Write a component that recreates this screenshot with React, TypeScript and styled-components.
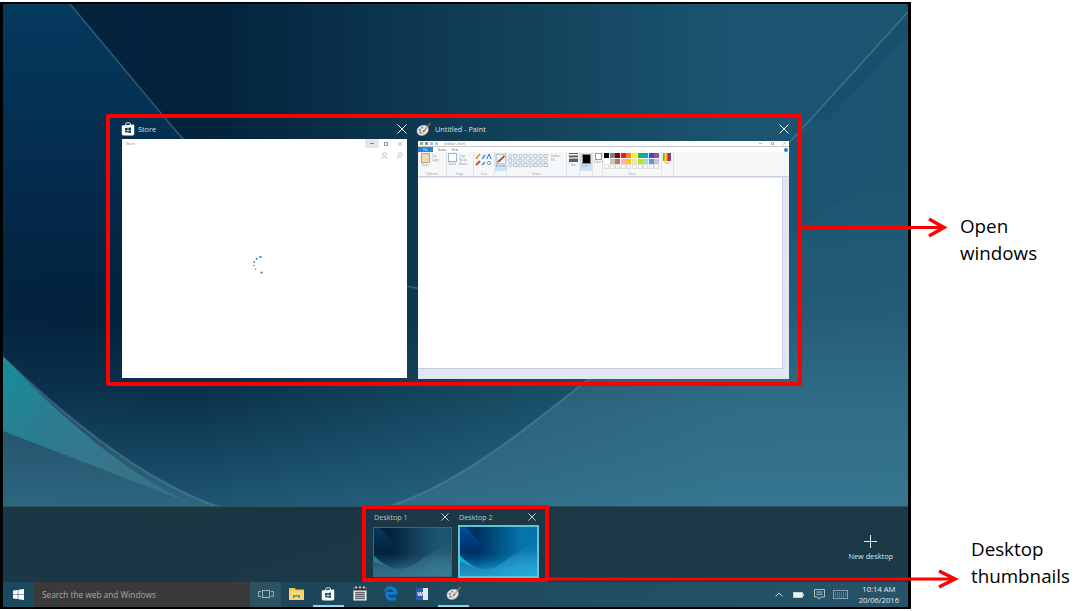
import styled, { createGlobalStyle } from "styled-components";
import { FaEdgeLegacy } from "react-icons/fa6";

// Task view screenshot: two windows and two desktop thumbnails, with red call-outs

const ROW_ONE = ["#000000", "#7f7f7f", "#880015", "#ed1c24", "#ff7f27", "#fff200", "#22b14c", "#00a2e8", "#3f48cc", "#a349a4"];
const ROW_TWO = ["#ffffff", "#c3c3c3", "#b97a57", "#ffaec9", "#ffc90e", "#efe4b0", "#b5e61d", "#99d9ea", "#7092be", "#c8bfe7"];
const ROW_THREE = Array(10).fill("#f8f8f8");

const UPPER_CURVE = "M70 4L165 118C250 220 360 300 470 290C620 275 740 200 810 120L908 12";
const LOWER_CURVE = "M3 357C100 450 200 522 300 522C420 522 510 440 590 378C700 295 820 215 908 160";

const GlobalStyle = createGlobalStyle`
  * { box-sizing: border-box; }
  body {
    margin: 0;
    background: #ffffff;
    font-family: "Open Sans", "Noto Sans", sans-serif;
  }
`;

const Page = styled.div`
  position: relative;
  display: flex;
  width: 1076px;
  height: 611px;
  overflow: hidden;
  background: #ffffff;
`;

const Screen = styled.div`
  position: relative;
  display: flex;
  flex-direction: column;
  flex: none;
  width: 911px;
  height: 607px;
  margin-top: 2px;
  border-style: solid;
  border-color: #000000;
  border-width: 2px 3px 2px 3px;
  overflow: hidden;
`;

const WallpaperSvg = styled.svg<{ $bright?: boolean }>`
  display: block;
  width: 100%;
  height: 100%;
  filter: ${(p) => (p.$bright ? "brightness(1.3) saturate(1.5)" : "none")};
`;

const WallpaperLayer = styled.div`
  position: absolute;
  inset: 0;
`;

const Stage = styled.div`
  position: relative;
  flex: none;
  height: 502px;
  padding: 110px 0 0 103px;
`;

const WindowsFrame = styled.div`
  display: flex;
  width: 696px;
  height: 272px;
  padding: 2px 8px 0 12px;
  border: 4px solid #ff0000;
  border-radius: 2px;
`;

const WindowCard = styled.div<{ $width: number; $gap: number }>`
  display: flex;
  flex-direction: column;
  flex: none;
  width: ${(p) => p.$width}px;
  margin-right: ${(p) => p.$gap}px;
`;

const WindowHeader = styled.div`
  display: flex;
  align-items: center;
  height: 19px;
  padding-bottom: 1px;
`;

const WindowTitle = styled.span<{ $indent: number }>`
  flex: 1;
  margin-left: ${(p) => p.$indent}px;
  color: #d5e1e7;
  font-size: 7.3px;
  white-space: nowrap;
`;

const CloseIcon = styled.svg<{ $size: number }>`
  flex: none;
  width: ${(p) => p.$size}px;
  height: ${(p) => p.$size}px;
  stroke: #f2f6f8;
  stroke-width: 1;
  fill: none;
`;

const AppIconSlot = styled.div<{ $shift: number }>`
  display: flex;
  flex: none;
  margin-left: ${(p) => p.$shift}px;
`;

const StoreThumb = styled.div`
  display: flex;
  flex-direction: column;
  height: 239px;
  background: #ffffff;
`;

const StoreTitleBar = styled.div`
  display: flex;
  align-items: center;
  height: 9px;
  padding-left: 4px;
`;

const TinyText = styled.span<{ $color?: string; $size?: number }>`
  flex: 1;
  color: ${(p) => p.$color ?? "#777777"};
  font-size: ${(p) => p.$size ?? 3.5}px;
  white-space: nowrap;
`;

const CaptionButton = styled.div<{ $active?: boolean }>`
  display: flex;
  align-items: center;
  justify-content: center;
  width: 14px;
  height: 9px;
  background: ${(p) => (p.$active ? "#e6e6e6" : "transparent")};
`;

const StoreTools = styled.div`
  display: flex;
  justify-content: flex-end;
  gap: 8px;
  padding: 4px 4px 0 0;
`;

const SpinnerArea = styled.div`
  display: flex;
  flex: 1;
  justify-content: center;
  padding: 97px 11px 0 0;
`;

const PaintThumb = styled.div`
  display: flex;
  flex-direction: column;
  height: 238px;
  margin-top: 2px;
  background: #e0e7f3;
  filter: blur(0.2px);
`;

const PaintTitleBar = styled.div`
  display: flex;
  align-items: center;
  gap: 2px;
  height: 6px;
  padding: 0 3px 0 2px;
  background: #ffffff;
  border-bottom: 1px solid #c9c9c9;
`;

const QuickAccess = styled.div`
  display: flex;
  gap: 2px;
  margin-right: 4px;
`;

const QuickDot = styled.div<{ $color: string }>`
  width: 3px;
  height: 3px;
  background: ${(p) => p.$color};
`;

const WindowGlyphs = styled.div`
  display: flex;
  align-items: center;
  gap: 9px;
`;

const PaintTabs = styled.div`
  display: flex;
  align-items: center;
  gap: 5px;
  height: 5px;
  padding-right: 1px;
  background: #ffffff;
`;

const FileTab = styled.div`
  display: flex;
  align-items: center;
  justify-content: center;
  width: 15px;
  height: 5px;
  background: #2b7fd4;
  color: #ffffff;
  font-size: 3px;
`;

const TabLabel = styled.span`
  color: #555555;
  font-size: 3px;
`;

const HelpDot = styled.div`
  width: 4px;
  height: 4px;
  margin-left: auto;
  border-radius: 50%;
  background: #1f7fd6;
`;

const Ribbon = styled.div`
  display: flex;
  height: 25px;
  background: #f6f7f8;
  border-bottom: 1px solid #c6cee0;
`;

const RibbonGroup = styled.div<{ $width: number; $pad?: number }>`
  position: relative;
  display: flex;
  gap: 2px;
  flex: none;
  width: ${(p) => p.$width}px;
  padding: 1px 0 0 ${(p) => p.$pad ?? 1}px;
  border-right: 1px solid #e2e3e6;
`;

const GroupLabel = styled.span`
  position: absolute;
  left: 0;
  right: 0;
  bottom: 0;
  color: #9a9a9a;
  font-size: 2.6px;
  line-height: 4px;
  text-align: center;
`;

const ToolBlock = styled.div<{ $width: number; $height: number; $color: string; $edge?: string }>`
  flex: none;
  width: ${(p) => p.$width}px;
  height: ${(p) => p.$height}px;
  background: ${(p) => p.$color};
  border: 1px solid ${(p) => p.$edge ?? "transparent"};
`;

const ToolColumn = styled.div`
  display: flex;
  flex-direction: column;
  align-items: center;
  flex: none;
`;

const ToolStack = styled.div`
  display: flex;
  flex-direction: column;
  gap: 0;
  padding-top: 1px;
`;

const ToolLine = styled.span`
  color: #8a8a8a;
  font-size: 2.8px;
  line-height: 4px;
  white-space: nowrap;
`;

const Highlight = styled.div`
  display: flex;
  flex: none;
  flex-direction: column;
  align-items: center;
  width: 12px;
  height: 18px;
  padding-top: 1px;
  background: #cfe3f6;
`;

const SwatchGrid = styled.div`
  display: grid;
  grid-template-columns: repeat(10, 5px);
  grid-auto-rows: 5px;
  gap: 0.6px;
`;

const Swatch = styled.div<{ $empty: boolean }>`
  border: ${(p) => (p.$empty ? "0.5px solid #dedede" : "none")};
`;

const PaintWorkspace = styled.div`
  display: flex;
  flex: 1;
  flex-direction: column;
  padding: 1px 6px 0 0;
`;

const PaintCanvas = styled.div`
  height: 191px;
  background: #ffffff;
  border-right: 1px solid #c4cde0;
  border-bottom: 1px solid #c4cde0;
`;

const DesktopBar = styled.div`
  position: relative;
  display: flex;
  flex: none;
  height: 76px;
  padding-left: 359px;
  background: rgba(24, 50, 62, 0.9);
  border-top: 1px solid rgba(70, 110, 125, 0.5);
`;

const DesktopFrame = styled.div`
  display: flex;
  gap: 6px;
  width: 187px;
  height: 77px;
  margin-top: -2px;
  padding: 0 0 0 7px;
  border: 4px solid #ff0000;
  border-radius: 2px;
`;

const DesktopCard = styled.div<{ $width: number }>`
  display: flex;
  flex-direction: column;
  flex: none;
  width: ${(p) => p.$width}px;
`;

const DesktopHeader = styled.div`
  display: flex;
  align-items: center;
  justify-content: space-between;
  height: 17px;
  padding: 0 3px 1px 1px;
`;

const DesktopLabel = styled.span`
  color: #b9c8cf;
  font-size: 7.2px;
  white-space: nowrap;
`;

const DesktopThumb = styled.div<{ $active?: boolean }>`
  overflow: hidden;
  height: ${(p) => (p.$active ? 54 : 50)}px;
  margin-top: ${(p) => (p.$active ? -1 : 1)}px;
  border: ${(p) => (p.$active ? "2px solid #5fc3dc" : "1px solid #3f6676")};
  outline: ${(p) => (p.$active ? "1px solid #0c3040" : "none")};
  outline-offset: -3px;
`;

const NewDesktop = styled.div`
  display: flex;
  flex-direction: column;
  align-items: center;
  gap: 3px;
  margin-left: auto;
  margin-right: 15px;
  padding-top: 28px;
`;

const NewDesktopLabel = styled.span`
  color: #dfe7ea;
  font-size: 7.3px;
  white-space: nowrap;
`;

const Taskbar = styled.div`
  position: relative;
  display: flex;
  flex: none;
  height: 25px;
  background: linear-gradient(90deg, rgba(24, 62, 78, 0.95), rgba(36, 82, 102, 0.95));
`;

const StartTile = styled.div`
  display: flex;
  align-items: center;
  justify-content: center;
  width: 31px;
  background: #1b4a5f;
`;

const SearchBox = styled.div`
  display: flex;
  align-items: center;
  width: 216px;
  padding-left: 8px;
  background: #3a3a3a;
  color: #a9a9a9;
  font-size: 8.3px;
  white-space: nowrap;
`;

const TaskSlot = styled.div<{ $active?: boolean; $lit?: boolean }>`
  display: flex;
  align-items: center;
  justify-content: center;
  flex: none;
  width: 31.3px;
  border-bottom: 2px solid ${(p) => (p.$active ? "#8fd6e8" : "transparent")};
  background: ${(p) => (p.$lit ? "rgba(255,255,255,0.07)" : "transparent")};
`;

const WordTile = styled.div`
  display: flex;
  align-items: center;
  justify-content: center;
  width: 12px;
  height: 12px;
  background: linear-gradient(90deg, #2a5caa 62%, #dfe8f5 62%);
  color: #ffffff;
  font-family: "Liberation Sans", sans-serif;
  font-size: 6px;
  font-weight: 700;
  padding-right: 4px;
`;

const Tray = styled.div`
  display: flex;
  align-items: center;
  margin-left: auto;
  padding-right: 9px;
`;

const TrayIcon = styled.div<{ $width: number }>`
  display: flex;
  justify-content: center;
  flex: none;
  width: ${(p) => p.$width}px;
`;

const Clock = styled.div`
  margin-left: 8px;
  color: #e6edf0;
  font-size: 7.6px;
  line-height: 11px;
  text-align: center;
  white-space: nowrap;
`;

const Side = styled.div`
  display: flex;
  flex-direction: column;
  color: #000000;
  font-size: 18.8px;
  line-height: 27px;
`;

const Note = styled.div<{ $top: number; $left: number }>`
  margin-top: ${(p) => p.$top}px;
  margin-left: ${(p) => p.$left}px;
  white-space: nowrap;
`;

const ArrowLayer = styled.svg`
  position: absolute;
  inset: 0;
  width: 1076px;
  height: 611px;
  pointer-events: none;
`;

function Wallpaper({ id, bright }: { id: string; bright?: boolean }) {
  return (
    <WallpaperSvg viewBox="3 4 905 603" preserveAspectRatio="none" $bright={bright}>
      <defs>
        <linearGradient id={`${id}-base`} x1="0" x2="1" y1="0" y2="0">
          <stop offset="0" stopColor="#03243f" />
          <stop offset="0.22" stopColor="#03223c" />
          <stop offset="0.55" stopColor="#124058" />
          <stop offset="0.8" stopColor="#1b5470" />
          <stop offset="1" stopColor="#1c5570" />
        </linearGradient>
        <linearGradient id={`${id}-corner`} x1="0" x2="0" y1="0" y2="1">
          <stop offset="0" stopColor="#05395e" />
          <stop offset="0.6" stopColor="#04294a" />
          <stop offset="1" stopColor="#03233d" stopOpacity="0" />
        </linearGradient>
        <linearGradient id={`${id}-veil`} x1="0" x2="0" y1="0" y2="1">
          <stop offset="0" stopColor="#35809b" stopOpacity="0" />
          <stop offset="0.25" stopColor="#2f7d99" stopOpacity="0.16" />
          <stop offset="0.65" stopColor="#35809b" stopOpacity="0.56" />
          <stop offset="1" stopColor="#35809b" stopOpacity="0.72" />
        </linearGradient>
        <linearGradient id={`${id}-band`} x1="0" x2="0" y1="0" y2="1">
          <stop offset="0" stopColor="#5c94a8" stopOpacity="0" />
          <stop offset="0.3" stopColor="#5c94a8" stopOpacity="0.1" />
          <stop offset="0.55" stopColor="#5c94a8" stopOpacity="0.28" />
          <stop offset="1" stopColor="#5c94a8" stopOpacity="0.2" />
        </linearGradient>
        <linearGradient id={`${id}-wedge`} x1="0" x2="1" y1="0" y2="1">
          <stop offset="0" stopColor="#148f9a" />
          <stop offset="0.35" stopColor="#2c7c90" />
          <stop offset="1" stopColor="#4b8598" stopOpacity="0.35" />
        </linearGradient>
        <linearGradient id={`${id}-line`} x1="0" x2="1" y1="0" y2="0">
          <stop offset="0" stopColor="#86b3c2" stopOpacity="0.26" />
          <stop offset="0.65" stopColor="#86b3c2" stopOpacity="0.26" />
          <stop offset="0.85" stopColor="#86b3c2" stopOpacity="0.04" />
          <stop offset="1" stopColor="#86b3c2" stopOpacity="0" />
        </linearGradient>
      </defs>
      <rect x="3" y="4" width="905" height="603" fill={`url(#${id}-base)`} />
      <path d="M3 4H70L165 118L250 210L120 340H3Z" fill={`url(#${id}-corner)`} />
      <rect x="3" y="320" width="905" height="287" fill={`url(#${id}-veil)`} />
      <path d={`${LOWER_CURVE}V607H3Z`} fill={`url(#${id}-band)`} />
      <path d="M908 12L814 118L826 122L908 36Z" fill="#0f4562" opacity="0.32" />
      <path d="M3 357C60 415 120 470 190 503L3 431Z" fill={`url(#${id}-wedge)`} />
      <path d={UPPER_CURVE} fill="none" stroke="#6fa2b5" strokeOpacity="0.36" strokeWidth="1.8" />
      <path d={LOWER_CURVE} fill="none" stroke={`url(#${id}-line)`} strokeWidth="2" />
    </WallpaperSvg>
  );
}

function CloseGlyph({ size }: { size: number }) {
  return (
    <CloseIcon $size={size} viewBox="0 0 10 10">
      <path d="M0.5 0.5L9.5 9.5M9.5 0.5L0.5 9.5" />
    </CloseIcon>
  );
}

function WindowsLogo({ size, color }: { size: number; color: string }) {
  return (
    <svg width={size} height={size} viewBox="0 0 12 12" fill={color}>
      <path d="M0 1.7L5.2 1V5.7H0ZM5.8 0.9L12 0V5.7H5.8ZM0 6.3H5.2V11L0 10.3ZM5.8 6.3H12V12L5.8 11.1Z" />
    </svg>
  );
}

function StoreBag({ size, dark }: { size: number; dark?: boolean }) {
  const mark = dark ? "#1d4a5d" : "#0d3c5c";
  return (
    <svg width={size} height={size} viewBox="0 0 14 14">
      <path d="M4.5 3.2V2.2C4.5 .6 9.5 .2 9.5 1.8V3" fill="none" stroke="#ffffff" strokeWidth="1" />
      <path d="M0.8 3.6L13.2 2.4V12.4L11.8 13.6H2.2L0.8 12.4Z" fill="#ffffff" />
      <path d="M4 6.1L6.7 5.8V7.9H4ZM7.3 5.7L10 5.4V7.9H7.3ZM4 8.5H6.7V10.6L4 10.3ZM7.3 8.5H10V11L7.3 10.7Z" fill={mark} />
    </svg>
  );
}

function PaintPalette({ size }: { size: number }) {
  return (
    <svg width={size} height={size} viewBox="0 0 16 16">
      <path d="M1 9.5C1 5.5 5 3.5 8.5 3.5C12 3.5 13.8 5.6 13.2 8.8C12.6 12.4 8.6 15 4.8 14.4C2.4 14 1 12.2 1 9.5Z" fill="#dfe6ee" stroke="#8ea3b8" strokeWidth="0.5" />
      <circle cx="4.1" cy="8.4" r="1.2" fill="#3f8fdc" />
      <circle cx="6.6" cy="6" r="1.1" fill="#4fb04a" />
      <circle cx="4.8" cy="11.4" r="1.2" fill="#e5493a" />
      <circle cx="8" cy="12.1" r="1" fill="#f0b429" />
      <path d="M15.2 .6L8.6 8.2L9.8 9.4L15.6 1.4Z" fill="#d9892b" />
      <path d="M8.6 8.2C7.6 9 7.4 10.2 7 10.8C8.4 10.8 9.6 10.4 9.8 9.4Z" fill="#b24a2b" />
    </svg>
  );
}

function ExplorerIcon() {
  return (
    <svg width="15" height="13" viewBox="0 0 15 13">
      <path d="M0 1H5.5L7 2.5H15V13H0Z" fill="#f5c74e" />
      <rect x="0" y="4" width="15" height="9" fill="#fbd66a" />
      <rect x="4" y="8" width="7" height="3" fill="#2a9fd6" />
      <rect x="5.5" y="9.6" width="4" height="3.4" fill="#fbd66a" />
    </svg>
  );
}

function CalendarIcon() {
  return (
    <svg width="14" height="15" viewBox="0 0 14 15">
      <rect x="0.5" y="1.5" width="13" height="13" fill="#f3f5f6" />
      <rect x="0.5" y="1.5" width="13" height="3" fill="#2a2f33" />
      <path d="M3 0V3M7 0V3M11 0V3" stroke="#f3f5f6" strokeWidth="1" />
      <path d="M2 6.5H12M2 8.5H12M2 10.5H12M2 12.5H12M3 5.5V13.5M5 5.5V13.5M7 5.5V13.5M9 5.5V13.5M11 5.5V13.5" stroke="#4a4f53" strokeWidth="0.8" />
    </svg>
  );
}

function SpinnerDots() {
  const dots = [
    [7.5, 1, 1.1],
    [3.6, 2.7, 1],
    [1.3, 6, 0.9],
    [1, 9.5, 0.8],
    [2.6, 13, 0.7],
    [8.5, 16.5, 1.1],
  ];
  return (
    <svg width="12" height="19" viewBox="0 0 12 19" fill="#2f7fc4">
      {dots.map(([cx, cy, r]) => (
        <circle key={`${cx}-${cy}`} cx={cx} cy={cy} r={r} />
      ))}
    </svg>
  );
}

function ShapesGlyphs() {
  const rows = [0, 1, 2];
  const cols = [0, 1, 2, 3, 4, 5, 6, 7];
  return (
    <svg width="41" height="15" viewBox="0 0 44 15" fill="none" stroke="#7f9dc0" strokeWidth="0.6">
      {rows.map((r) =>
        cols.map((c) =>
          (r + c) % 2 === 0 ? (
            <circle key={`${r}-${c}`} cx={2.5 + c * 5.4} cy={2.5 + r * 5} r="1.8" />
          ) : (
            <rect key={`${r}-${c}`} x={0.8 + c * 5.4} y={0.8 + r * 5} width="3.4" height="3.4" />
          ),
        ),
      )}
    </svg>
  );
}

function PaintRibbon() {
  return (
    <Ribbon>
      <RibbonGroup $width={29} $pad={3}>
        <ToolColumn>
          <ToolBlock $width={9} $height={10} $color="#f1d9b5" $edge="#b9a27f" />
          <ToolLine>Paste</ToolLine>
        </ToolColumn>
        <ToolStack>
          <ToolLine>Cut</ToolLine>
          <ToolLine>Copy</ToolLine>
        </ToolStack>
        <GroupLabel>Clipboard</GroupLabel>
      </RibbonGroup>
      <RibbonGroup $width={27}>
        <ToolColumn>
          <ToolBlock $width={9} $height={9} $color="#ffffff" $edge="#9db4cf" />
          <ToolLine>Select</ToolLine>
        </ToolColumn>
        <ToolStack>
          <ToolLine>Crop</ToolLine>
          <ToolLine>Resize</ToolLine>
          <ToolLine>Rotate</ToolLine>
        </ToolStack>
        <GroupLabel>Image</GroupLabel>
      </RibbonGroup>
      <RibbonGroup $width={21}>
        <svg width="18" height="14" viewBox="0 0 18 14">
          <path d="M1 6L5 1" stroke="#d08a3a" strokeWidth="1.4" />
          <path d="M7 6L10 2" stroke="#3f8fdc" strokeWidth="1.4" />
          <path d="M14 1L11.8 6M14 1L16.2 6" stroke="#2e6fb8" strokeWidth="1" />
          <path d="M1 12L5 8" stroke="#e5493a" strokeWidth="2.2" />
          <path d="M7 12L10 9" stroke="#3f8fdc" strokeWidth="1.4" />
          <circle cx="14" cy="10" r="1.6" fill="none" stroke="#6b7f90" strokeWidth="0.8" />
        </svg>
        <GroupLabel>Tools</GroupLabel>
      </RibbonGroup>
      <RibbonGroup $width={12} $pad={0}>
        <Highlight>
          <svg width="10" height="10" viewBox="0 0 10 10">
            <rect x="0.5" y="0.5" width="9" height="9" fill="#f5f5f5" stroke="#9aa7b5" strokeWidth="0.5" />
            <path d="M1.5 8C3.5 7.5 5 5 8.5 2" stroke="#b5442b" strokeWidth="1.8" fill="none" />
          </svg>
          <ToolLine>Brushes</ToolLine>
        </Highlight>
      </RibbonGroup>
      <RibbonGroup $width={60}>
        <ShapesGlyphs />
        <ToolStack>
          <ToolLine>Outline</ToolLine>
          <ToolLine>Fill</ToolLine>
        </ToolStack>
        <GroupLabel>Shapes</GroupLabel>
      </RibbonGroup>
      <RibbonGroup $width={13} $pad={2}>
        <ToolColumn>
          <svg width="9" height="10" viewBox="0 0 9 10">
            <rect x="0" y="0" width="9" height="1" fill="#50606f" />
            <rect x="0" y="2.4" width="9" height="2" fill="#50606f" />
            <rect x="0" y="5.6" width="9" height="3.4" fill="#50606f" />
          </svg>
          <ToolLine>Size</ToolLine>
        </ToolColumn>
      </RibbonGroup>
      <RibbonGroup $width={13} $pad={0}>
        <Highlight>
          <ToolBlock $width={9} $height={10} $color="#000000" $edge="#8a8a8a" />
          <ToolLine>Color 1</ToolLine>
        </Highlight>
      </RibbonGroup>
      <RibbonGroup $width={10}>
        <ToolColumn>
          <ToolBlock $width={7} $height={7} $color="#ffffff" $edge="#9a9a9a" />
          <ToolLine>Color 2</ToolLine>
        </ToolColumn>
      </RibbonGroup>
      <RibbonGroup $width={59}>
        <SwatchGrid>
          {[...ROW_ONE, ...ROW_TWO, ...ROW_THREE].map((color, i) => (
            <Swatch key={i} $empty={i >= 20} style={{ background: color }} />
          ))}
        </SwatchGrid>
        <GroupLabel>Colors</GroupLabel>
      </RibbonGroup>
      <RibbonGroup $width={12} $pad={1}>
        <ToolColumn>
          <svg width="8" height="8" viewBox="0 0 8 8">
            <defs>
              <linearGradient id="edit-colors" x1="0" x2="1" y1="0" y2="0">
                <stop offset="0" stopColor="#22b14c" />
                <stop offset="0.35" stopColor="#fff200" />
                <stop offset="0.65" stopColor="#ed1c24" />
                <stop offset="1" stopColor="#3f48cc" />
              </linearGradient>
            </defs>
            <rect width="8" height="8" fill="url(#edit-colors)" />
          </svg>
          <ToolLine>Edit</ToolLine>
        </ToolColumn>
      </RibbonGroup>
    </Ribbon>
  );
}

export default function App() {
  return (
    <Page>
      <GlobalStyle />
      <Screen>
        <WallpaperLayer>
          <Wallpaper id="main" />
        </WallpaperLayer>

        <Stage>
          <WindowsFrame>
            <WindowCard $width={285} $gap={11}>
              <WindowHeader>
                <AppIconSlot $shift={-1}>
                  <StoreBag size={14} />
                </AppIconSlot>
                <WindowTitle $indent={3}>Store</WindowTitle>
                <CloseGlyph size={10} />
              </WindowHeader>
              <StoreThumb>
                <StoreTitleBar>
                  <TinyText>Store</TinyText>
                  <CaptionButton $active>
                    <svg width="4" height="1"><rect width="4" height="1" fill="#888888" /></svg>
                  </CaptionButton>
                  <CaptionButton>
                    <svg width="4" height="4"><rect x=".5" y=".5" width="3" height="3" fill="none" stroke="#999999" /></svg>
                  </CaptionButton>
                  <CaptionButton>
                    <svg width="4" height="4"><path d="M0 0L4 4M4 0L0 4" stroke="#999999" strokeWidth=".7" /></svg>
                  </CaptionButton>
                </StoreTitleBar>
                <StoreTools>
                  <svg width="7" height="7" viewBox="0 0 6 6" fill="none" stroke="#b5b5b5" strokeWidth=".7">
                    <circle cx="3" cy="2" r="1.5" />
                    <path d="M.5 6C.8 4 5.2 4 5.5 6" />
                  </svg>
                  <svg width="7" height="7" viewBox="0 0 6 6" fill="none" stroke="#b5b5b5" strokeWidth=".7">
                    <circle cx="3.6" cy="2.4" r="1.8" />
                    <path d="M2.3 3.8L.4 5.8" />
                  </svg>
                </StoreTools>
                <SpinnerArea>
                  <SpinnerDots />
                </SpinnerArea>
              </StoreThumb>
            </WindowCard>

            <WindowCard $width={371} $gap={0}>
              <WindowHeader>
                <AppIconSlot $shift={-2}>
                  <PaintPalette size={15} />
                </AppIconSlot>
                <WindowTitle $indent={4}>Untitled - Paint</WindowTitle>
                <CloseGlyph size={10} />
              </WindowHeader>
              <PaintThumb>
                <PaintTitleBar>
                  <QuickAccess>
                    <QuickDot $color="#8cb06a" />
                    <QuickDot $color="#6f93c4" />
                    <QuickDot $color="#b4c4da" />
                    <QuickDot $color="#b4c4da" />
                  </QuickAccess>
                  <TinyText $size={3}>Untitled - Paint</TinyText>
                  <WindowGlyphs>
                    <svg width="3" height="1"><rect width="3" height="1" fill="#b5b5b5" /></svg>
                    <svg width="3" height="3"><rect x=".5" y=".5" width="2" height="2" fill="none" stroke="#b5b5b5" /></svg>
                    <svg width="3" height="3"><path d="M0 0L3 3M3 0L0 3" stroke="#b5b5b5" strokeWidth=".6" /></svg>
                  </WindowGlyphs>
                </PaintTitleBar>
                <PaintTabs>
                  <FileTab>File</FileTab>
                  <TabLabel>Home</TabLabel>
                  <TabLabel>View</TabLabel>
                  <HelpDot />
                </PaintTabs>
                <PaintRibbon />
                <PaintWorkspace>
                  <PaintCanvas />
                </PaintWorkspace>
              </PaintThumb>
            </WindowCard>
          </WindowsFrame>
        </Stage>

        <DesktopBar>
          <DesktopFrame>
            <DesktopCard $width={79}>
              <DesktopHeader>
                <DesktopLabel>Desktop 1</DesktopLabel>
                <CloseGlyph size={8} />
              </DesktopHeader>
              <DesktopThumb>
                <Wallpaper id="thumb-one" />
              </DesktopThumb>
            </DesktopCard>
            <DesktopCard $width={81}>
              <DesktopHeader>
                <DesktopLabel>Desktop 2</DesktopLabel>
                <CloseGlyph size={8} />
              </DesktopHeader>
              <DesktopThumb $active>
                <Wallpaper id="thumb-two" bright />
              </DesktopThumb>
            </DesktopCard>
          </DesktopFrame>
          <NewDesktop>
            <svg width="13" height="13" viewBox="0 0 13 13" stroke="#e8eef0" strokeWidth="1">
              <path d="M6.5 0V13M0 6.5H13" />
            </svg>
            <NewDesktopLabel>New desktop</NewDesktopLabel>
          </NewDesktop>
        </DesktopBar>

        <Taskbar>
          <StartTile>
            <WindowsLogo size={11} color="#ffffff" />
          </StartTile>
          <SearchBox>Search the web and Windows</SearchBox>
          <TaskSlot $lit>
            <svg width="16" height="8" viewBox="0 0 16 8" fill="none" stroke="#b9c6cc" strokeWidth="0.8">
              <rect x="4.4" y=".4" width="7.2" height="7.2" />
              <path d="M3 1.5H.6V6.5H3M13 1.5H15.4V6.5H13" />
            </svg>
          </TaskSlot>
          <TaskSlot>
            <ExplorerIcon />
          </TaskSlot>
          <TaskSlot $active>
            <StoreBag size={14} dark />
          </TaskSlot>
          <TaskSlot>
            <CalendarIcon />
          </TaskSlot>
          <TaskSlot>
            <FaEdgeLegacy size={15} color="#0f7ad8" />
          </TaskSlot>
          <TaskSlot>
            <WordTile>W</WordTile>
          </TaskSlot>
          <TaskSlot $active>
            <PaintPalette size={15} />
          </TaskSlot>
          <Tray>
            <TrayIcon $width={20}>
              <svg width="8" height="5" viewBox="0 0 8 5" fill="none" stroke="#dfe7ea" strokeWidth="0.9">
                <path d="M.5 4.5L4 1L7.5 4.5" />
              </svg>
            </TrayIcon>
            <TrayIcon $width={20}>
              <svg width="11" height="6" viewBox="0 0 11 6">
                <rect x=".4" y=".4" width="9" height="5.2" fill="#f2f5f6" stroke="#dfe7ea" strokeWidth=".6" />
                <rect x="9.6" y="1.8" width="1.2" height="2.4" fill="#dfe7ea" />
              </svg>
            </TrayIcon>
            <TrayIcon $width={22}>
              <svg width="11" height="11" viewBox="0 0 11 11" fill="none" stroke="#cfdade" strokeWidth=".8">
                <path d="M.5.5H10.5V8H6.5L5 10.2L3.8 8H.5Z" />
                <path d="M2.5 3H8.5M2.5 5.3H8.5" />
              </svg>
            </TrayIcon>
            <TrayIcon $width={20}>
              <svg width="15" height="9" viewBox="0 0 15 9" fill="none" stroke="#9fb2ba" strokeWidth=".8">
                <rect x=".4" y=".4" width="14.2" height="8.2" />
                <path d="M2 3H13M2 5H13M4 7H11" strokeDasharray="1 1" />
              </svg>
            </TrayIcon>
            <Clock>
              10:14 AM
              <br />
              20/06/2016
            </Clock>
          </Tray>
        </Taskbar>
      </Screen>

      <Side>
        <Note $top={213} $left={49}>
          Open
          <br />
          windows
        </Note>
        <Note $top={269} $left={60}>
          Desktop
          <br />
          thumbnails
        </Note>
      </Side>

      <ArrowLayer viewBox="0 0 1076 611" fill="none" stroke="#ff0000" strokeWidth="3">
        <path d="M801 227.5H943" />
        <path d="M929 219L944 227.5L929 236" strokeWidth="3.5" />
        <path d="M547 579H954" />
        <path d="M939 571L955 579L939 587" strokeWidth="3.5" />
      </ArrowLayer>
    </Page>
  );
}
